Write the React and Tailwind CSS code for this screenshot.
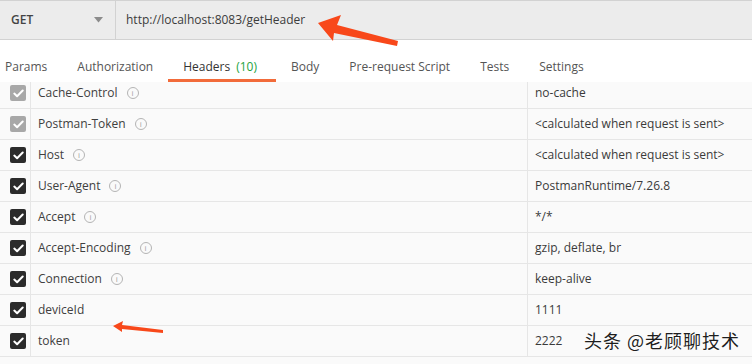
const tabs = [
  { label: 'Params' },
  { label: 'Authorization' },
  { label: 'Headers', count: '(10)', active: true },
  { label: 'Body' },
  { label: 'Pre-request Script' },
  { label: 'Tests' },
  { label: 'Settings' },
];

const rows = [
  { key: 'Cache-Control', value: 'no-cache', auto: true, info: true },
  { key: 'Postman-Token', value: '<calculated when request is sent>', auto: true, info: true },
  { key: 'Host', value: '<calculated when request is sent>', info: true },
  { key: 'User-Agent', value: 'PostmanRuntime/7.26.8', info: true },
  { key: 'Accept', value: '*/*', info: true },
  { key: 'Accept-Encoding', value: 'gzip, deflate, br', info: true },
  { key: 'Connection', value: 'keep-alive', info: true },
  { key: 'deviceId', value: '1111' },
  { key: 'token', value: '2222' },
];

function InfoIcon() {
  return (
    <span className="ml-[9px] inline-flex h-[12px] w-[12px] items-center justify-center rounded-full border border-[#b4b4b4] text-[8px] leading-none text-[#a0a0a0]">
      i
    </span>
  );
}

function Checkbox({ muted }) {
  return (
    <span
      className={`flex h-[16px] w-[16px] items-center justify-center rounded-[2px] ${
        muted ? 'bg-[#a8a8a8]' : 'bg-[#2b2b2b]'
      }`}
    >
      <svg width="11" height="9" viewBox="0 0 11 9" fill="none">
        <path d="M1.3 4.6 L4.1 7.2 L9.7 1.5" stroke="white" strokeWidth="2" strokeLinecap="round" strokeLinejoin="round" />
      </svg>
    </span>
  );
}

export default function App() {
  return (
    <div
      className="relative h-[364px] w-[752px] overflow-hidden bg-white text-[12px] text-[#3a3a3a]"
      style={{ fontFamily: '"Open Sans", "Noto Sans", sans-serif' }}
    >
      {/* Request bar */}
      <div className="flex h-[40px] border-y border-[#d2d2d2] bg-[#ececec]">
        <div className="flex w-[116px] items-center justify-between border-r border-[#d2d2d2] pl-[11px] pr-[12px]">
          <span className="font-semibold text-[#444]">GET</span>
          <svg width="9" height="6" viewBox="0 0 9 6">
            <path d="M0 0 H9 L4.5 5.5 Z" fill="#8c8c8c" />
          </svg>
        </div>
        <div className="flex items-center pl-[10px] text-[#3c3c3c]">http://localhost:8083/getHeader</div>
      </div>

      {/* Tabs */}
      <div className="flex h-[42px] items-end pl-[5px]">
        {tabs.map((tab, i) => (
          <div
            key={tab.label}
            className={`border-b-[3px] pb-[3px] leading-[18px] ${
              i === 0 ? 'pr-[15px]' : tab.active ? 'pl-[15px] pr-[19px]' : 'px-[15px]'
            } ${tab.active ? 'border-[#f26b3a] text-[#333]' : 'border-transparent text-[#555]'}`}
          >
            {tab.label}
            {tab.count && <span className="ml-[6px] text-[#26a340]">{tab.count}</span>}
          </div>
        ))}
      </div>

      {/* Headers table */}
      <div className="h-[282px] overflow-hidden bg-[#fafafa]">
        <div className="-mt-[4px]">
          {rows.map((row) => (
            <div key={row.key} className="flex h-[31px] border-b border-[#e6e6e6]">
              <div className="flex w-[31px] items-center border-r border-[#e6e6e6] pl-[10px]">
                <Checkbox muted={row.auto} />
              </div>
              <div className="flex w-[497px] items-center border-r border-[#e6e6e6] pl-[7px] text-[#404040]">
                {row.key}
                {row.info && <InfoIcon />}
              </div>
              <div className="flex flex-1 items-center pl-[7px] text-[#3a3a3a]">{row.value}</div>
            </div>
          ))}
        </div>
      </div>

      {/* Annotation arrows */}
      <svg className="absolute left-0 top-0" width="752" height="364" viewBox="0 0 752 364">
        <polygon points="318,23 341,15 337,25 398,41 397,46 334,33 333,41" fill="#f8481a" />
        <polygon points="113,326 123,321 122,325 163,330 163,333 122,329 122,332" fill="#f8481a" />
      </svg>

      {/* Watermark */}
      <div
        className="absolute left-[584px] top-[327px] text-[18px] tracking-[1px] text-[#1e1e1e]"
        style={{
          fontFamily: '"Noto Sans CJK SC", "Noto Sans", sans-serif',
          textShadow: '0 0 2px #fff, 0 0 2px #fff, 0 0 3px #fff',
        }}
      >
        头条 @老顾聊技术
      </div>
    </div>
  );
}
